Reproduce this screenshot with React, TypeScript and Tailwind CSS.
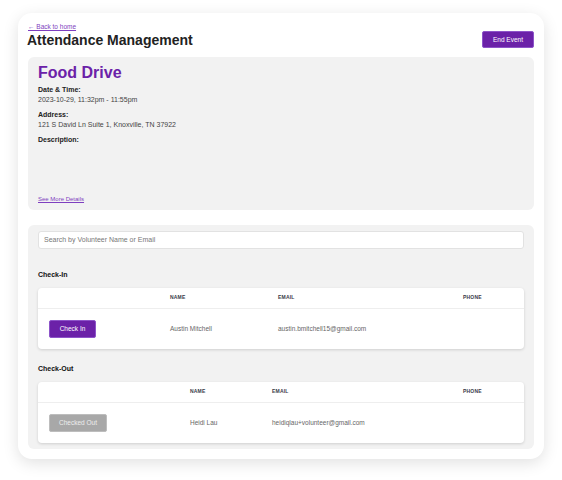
import React from "react";

const font = { fontFamily: '"Liberation Sans", Arial, sans-serif' };

function Table({
  cols,
  name,
  email,
  action,
}: {
  cols: string;
  name: string;
  email: string;
  action: React.ReactNode;
}) {
  return (
    <div className="rounded-[4px] bg-white shadow-[0_1px_3px_rgba(0,0,0,0.15)]">
      <div className={`grid ${cols} h-[21px] items-center border-b border-[#eeeeee] text-[5px] font-bold text-[#3a3a4a] tracking-[0.2px]`}>
        <div />
        <div className="pl-[11px]">NAME</div>
        <div className="pl-[11px]">EMAIL</div>
        <div className="pl-[11px]">PHONE</div>
      </div>
      <div className={`grid ${cols} h-[40px] items-center text-[6.5px] text-[#666]`}>
        <div className="pl-[11px]">{action}</div>
        <div className="pl-[11px]">{name}</div>
        <div className="pl-[11px]">{email}</div>
        <div />
      </div>
    </div>
  );
}

export default function App() {
  return (
    <div className="min-h-[480px] w-[562px] bg-white pl-[18px] pt-[13px]" style={font}>
      <div className="w-[526px] h-[446px] rounded-[14px] bg-white px-[10px] pt-[10px] shadow-[0_4px_16px_rgba(0,0,0,0.12)]">
        <div className="flex items-end justify-between">
          <div>
            <a className="block text-[6.5px] leading-[8px] text-[#7e3fc0] underline" href="#">
              ← Back to home
            </a>
            <h1 className="-ml-[1px] text-[14px] font-bold leading-[19px] text-[#222]">Attendance Management</h1>
          </div>
          <button className="mb-[2px] h-[17px] w-[52px] rounded-[2px] border border-[#8d54c9] bg-[#6b21a8] text-[6.5px] text-white">
            End Event
          </button>
        </div>

        <div className="mt-[7px] h-[153px] rounded-[6px] bg-[#f2f2f2] px-[10px] pt-[6px] flex flex-col">
          <div className="text-[16px] font-bold leading-[20px] text-[#6b21a8]">Food Drive</div>
          <div className="mt-[2px] text-[7px] font-bold leading-[9px] text-[#222]">Date &amp; Time:</div>
          <div className="mt-[1px] text-[7px] leading-[9px] text-[#444]">2023-10-29, 11:32pm - 11:55pm</div>
          <div className="mt-[6px] text-[7px] font-bold leading-[9px] text-[#222]">Address:</div>
          <div className="mt-[1px] text-[7px] leading-[9px] text-[#444]">121 S David Ln Suite 1, Knoxville, TN 37922</div>
          <div className="mt-[6px] text-[7px] font-bold leading-[9px] text-[#222]">Description:</div>
          <div className="flex-1" />
          <a className="mb-[7px] text-[6px] leading-[8px] text-[#7e3fc0] underline" href="#">
            See More Details
          </a>
        </div>

        <div className="mt-[15px] h-[224px] rounded-[6px] bg-[#f2f2f2] px-[10px] pt-[6px]">
          <div className="flex h-[18px] items-center rounded-[3px] border border-[#e2e2e2] bg-white px-[5px] text-[7px] text-[#777]">
            Search by Volunteer Name or Email
          </div>
          <div className="mt-[21px] text-[7px] font-bold leading-[9px] text-[#111]">Check-In</div>
          <div className="mt-[9px]">
            <Table
              cols="grid-cols-[121px_108px_185px_1fr]"
              name="Austin Mitchell"
              email="austin.bmitchell15@gmail.com"
              action={
                <button className="h-[18px] w-[47px] rounded-[2px] border border-[#8d54c9] bg-[#6b21a8] text-[6.5px] text-white">
                  Check In
                </button>
              }
            />
          </div>
          <div className="mt-[15px] text-[7px] font-bold leading-[9px] text-[#111]">Check-Out</div>
          <div className="mt-[9px]">
            <Table
              cols="grid-cols-[141px_82px_191px_1fr]"
              name="Heidi Lau"
              email="heidiqlau+volunteer@gmail.com"
              action={
                <button className="h-[18px] w-[58px] rounded-[2px] border border-[#bdbdbd] bg-[#a8a8a8] text-[6.5px] text-[#eeeeee]">
                  Checked Out
                </button>
              }
            />
          </div>
        </div>
      </div>
    </div>
  );
}
